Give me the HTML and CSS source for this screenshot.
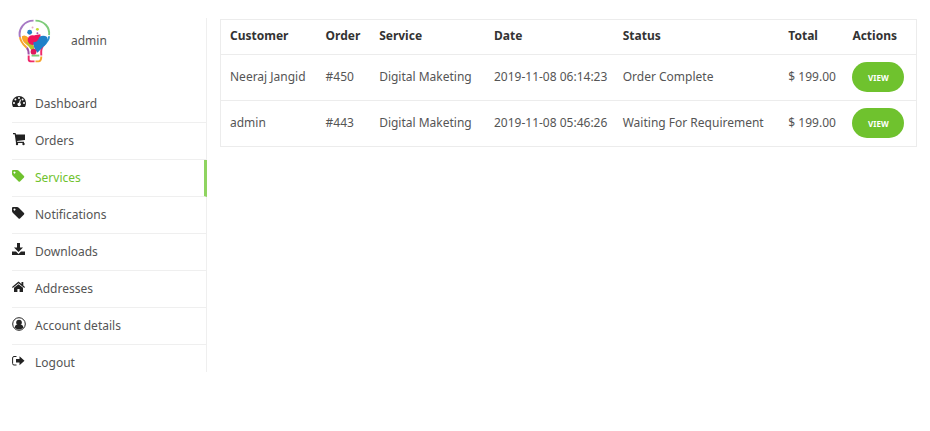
FILE: index.html
```html
<!DOCTYPE html>
<html lang="en">

<head>
    <meta charset="UTF-8">
    <meta name="viewport" content="width=device-width, initial-scale=1.0">
    <title>Services - My Account</title>
    <link rel="stylesheet" href="styles.css">
</head>

<body>
    <div class="account">
        <aside class="sidebar">
            <div class="profile">
                <svg class="logo" viewBox="0 0 34 46" fill="none" stroke-width="2" aria-hidden="true">
                    <!-- glass outline -->
                    <path d="M2 19C0 10 7 2 16 2" stroke="#a779c4" />
                    <path d="M18 2C27 2 33 9 32 17" stroke="#7dcb79" />
                    <path d="M32 18C32 22 29 25 26 28" stroke="#2b8fd0" />
                    <path d="M2 19C3 25 6 27 9 30" stroke="#f6a52c" />
                    <path d="M26 28C23 31 24 34 24 38" stroke="#ee2a6b" />
                    <path d="M9 30C11 32 11 34 11 37" stroke="#a04fa8" />
                    <path d="M11 38V42Q11 44 14 44H17" stroke="#ee2a6b" />
                    <path d="M18 44H21Q24 44 24 39" stroke="#f6a52c" />
                    <path d="M14 38H22" stroke="#7dcb79" />
                    <!-- paint -->
                    <path d="M4 18Q8 16 11 20L17 29L15 33Q12 29 8 26Q4 23 4 18Z" fill="#f6a52c" />
                    <path d="M8 24L14 25L17 31L14 33Q11 28 8 24Z" fill="#b5c72b" />
                    <circle cx="15" cy="22" r="5" fill="#f0145a" />
                    <path d="M17 17L23 16L24 24L17 27Z" fill="#f0145a" />
                    <path d="M16 24Q20 25 22 19Q26 16 30 19Q31 25 26 29L20 35Q15 29 16 24Z" fill="#1f80c8" />
                    <circle cx="16" cy="34" r="3" fill="#e0185c" />
                    <circle cx="12" cy="14" r="2.500" fill="#1f80c8" />
                    <circle cx="20" cy="11" r="1.500" fill="#c5d92d" />
                    <circle cx="15" cy="9" r="1" fill="#e7a5c8" />
                    <circle cx="20" cy="15" r="1" fill="#a04fa8" />
                </svg>
                <span>admin</span>
            </div>

            <nav class="menu">
                <a href="#">
                    <svg viewBox="0 0 14 14" fill="currentColor">
                        <path fill-rule="evenodd" d="M7 1a7 7 0 0 0-7 7q0 2 1 4h12q1-2 1-4a7 7 0 0 0-7-7ZM7 2a1 1 0 1 1 0 2a1 1 0 0 1 0-2ZM3.400 3.500a1 1 0 1 1 0 2a1 1 0 0 1 0-2ZM10.600 3.500a1 1 0 1 1 0 2a1 1 0 0 1 0-2ZM2 7a1 1 0 1 1 0 2a1 1 0 0 1 0-2ZM12 7a1 1 0 1 1 0 2a1 1 0 0 1 0-2ZM8 4.500L9 4.800L8.200 8a1.700 1.700 0 1 1-1.200-.3Z" />
                    </svg>
                    Dashboard
                </a>
                <a href="#">
                    <svg viewBox="0 0 14 14" fill="currentColor">
                        <path d="M1 1H3.500L4 2.500H13V8L5 9L5.200 9.800H12V11H4L2.700 2.300H1Z" />
                        <circle cx="5" cy="12" r="1.200" />
                        <circle cx="11.500" cy="12" r="1.200" />
                    </svg>
                    Orders
                </a>
                <a href="#" class="active">
                    <svg viewBox="0 0 14 14" fill="currentColor">
                        <path fill-rule="evenodd" d="M0 2Q0 1 1 1H5Q6 1 7 2L12 7Q12.600 7.700 12 8.400L8 12.400Q7.300 13 6.600 12.400L1 7Q0 6 0 5ZM2.500 2.500a1 1 0 1 0 .01 0Z" />
                    </svg>
                    Services
                </a>
                <a href="#">
                    <svg viewBox="0 0 14 14" fill="currentColor">
                        <path fill-rule="evenodd" d="M0 2Q0 1 1 1H5Q6 1 7 2L12 7Q12.600 7.700 12 8.400L8 12.400Q7.300 13 6.600 12.400L1 7Q0 6 0 5ZM2.500 2.500a1 1 0 1 0 .01 0Z" />
                    </svg>
                    Notifications
                </a>
                <a href="#">
                    <svg viewBox="0 0 14 14" fill="currentColor">
                        <path d="M5 0H8V4.500H11L6.500 9L2 4.500H5Z" />
                        <path d="M0 8.500H4L6.500 11L9 8.500H13V12H0Z" />
                    </svg>
                    Downloads
                </a>
                <a href="#">
                    <svg viewBox="0 0 14 14" fill="currentColor">
                        <path d="M6.500 1.500L9.500 4V2H11.300V5.600L13 7L12.300 8L6.500 3.200L.7 8L0 7Z" />
                        <path d="M2 7.800L6.500 4.200L11 7.800V12H7.600V9H5.400V12H2Z" />
                    </svg>
                    Addresses
                </a>
                <a href="#">
                    <svg viewBox="0 0 14 14" fill="currentColor">
                        <circle cx="7" cy="7" r="6.300" fill="none" stroke="currentColor" />
                        <circle cx="7" cy="5.500" r="2.800" />
                        <path d="M2.500 10.500Q3 8 5 7.500H9Q11 8 11.500 10.500Q9.500 12.500 7 12.500Q4.500 12.500 2.500 10.500Z" />
                    </svg>
                    Account details
                </a>
                <a href="#">
                    <svg viewBox="0 0 14 14" fill="currentColor">
                        <path d="M4.500 2.500H2Q.6 2.500.6 4V9.500Q.6 11 2 11H4.500" fill="none" stroke="currentColor" />
                        <path d="M4 5H7.500V2.300L12.500 6.800L7.500 11.300V8.600H4Z" />
                    </svg>
                    Logout
                </a>
            </nav>
        </aside>

        <main class="content">
            <table class="orders">
                <colgroup>
                    <col class="col-customer">
                    <col class="col-order">
                    <col class="col-service">
                    <col class="col-date">
                    <col class="col-status">
                    <col class="col-total">
                    <col class="col-actions">
                </colgroup>
                <thead>
                    <tr>
                        <th>Customer</th>
                        <th>Order</th>
                        <th>Service</th>
                        <th>Date</th>
                        <th>Status</th>
                        <th>Total</th>
                        <th>Actions</th>
                    </tr>
                </thead>
                <tbody>
                    <tr>
                        <td>Neeraj Jangid</td>
                        <td>#450</td>
                        <td>Digital Maketing</td>
                        <td>2019-11-08 06:14:23</td>
                        <td>Order Complete</td>
                        <td>$ 199.00</td>
                        <td><button type="button" class="view">VIEW</button></td>
                    </tr>
                    <tr>
                        <td>admin</td>
                        <td>#443</td>
                        <td>Digital Maketing</td>
                        <td>2019-11-08 05:46:26</td>
                        <td>Waiting For Requirement</td>
                        <td>$ 199.00</td>
                        <td><button type="button" class="view">VIEW</button></td>
                    </tr>
                </tbody>
            </table>
        </main>
    </div>
</body>

</html>
```
FILE: styles.css
```css
body {
    font-family: "Noto Sans", sans-serif;
    font-size: 12px;
    line-height: 18px;
    margin: 0;
    color: #555;
    background-color: #fff;
}

.account {
    display: flex;
    align-items: flex-start;
    gap: 13px;
    padding: 18px 13px 18px 12px;
}

.sidebar {
    flex: 0 0 194px;
    border-right: 1px solid #efefef;
}

.profile {
    display: flex;
    align-items: center;
    gap: 20px;
    padding: 0 0 22px 6px;
}

.logo {
    width: 33px;
    height: 46px;
}

.menu a {
    display: flex;
    gap: 9px;
    padding: 9px 0;
    border-bottom: 1px solid #efefef;
    color: #555;
    text-decoration: none;
}

.menu a:last-child {
    padding-bottom: 0;
    border-bottom: none;
}

.menu svg {
    width: 14px;
    height: 14px;
    color: #222;
}

.menu a.active {
    margin-right: -1px;
    border-right: 3px solid #8fd460;
    color: #6fc22e;
}

.menu a.active svg {
    color: #6fc22e;
}

.content {
    flex: 1;
    min-width: 0;
}

.orders {
    width: 100%;
    margin-top: 1px;
    table-layout: fixed;
    border-collapse: collapse;
    border: 1px solid #ececec;
}

.orders th,
.orders td {
    padding: 8px 0 8px 9px;
    border-bottom: 1px solid #ececec;
    text-align: left;
    white-space: nowrap;
}

.orders th {
    padding-top: 7px;
    padding-bottom: 9px;
    color: #333;
    font-weight: bold;
}

.orders td {
    padding-top: 7px;
}

.col-customer {
    width: 13.8%;
}

.col-order {
    width: 7.7%;
}

.col-service {
    width: 16.5%;
}

.col-date {
    width: 18.5%;
}

.col-status {
    width: 23.8%;
}

.col-total {
    width: 9.2%;
}

.col-actions {
    width: 10.5%;
}

.view {
    display: block;
    width: 52px;
    height: 30px;
    padding: 0;
    border: none;
    border-radius: 15px;
    background-color: #6fc22e;
    color: #fff;
    font-family: inherit;
    font-size: 8px;
    font-weight: bold;
    cursor: pointer;
}
```
